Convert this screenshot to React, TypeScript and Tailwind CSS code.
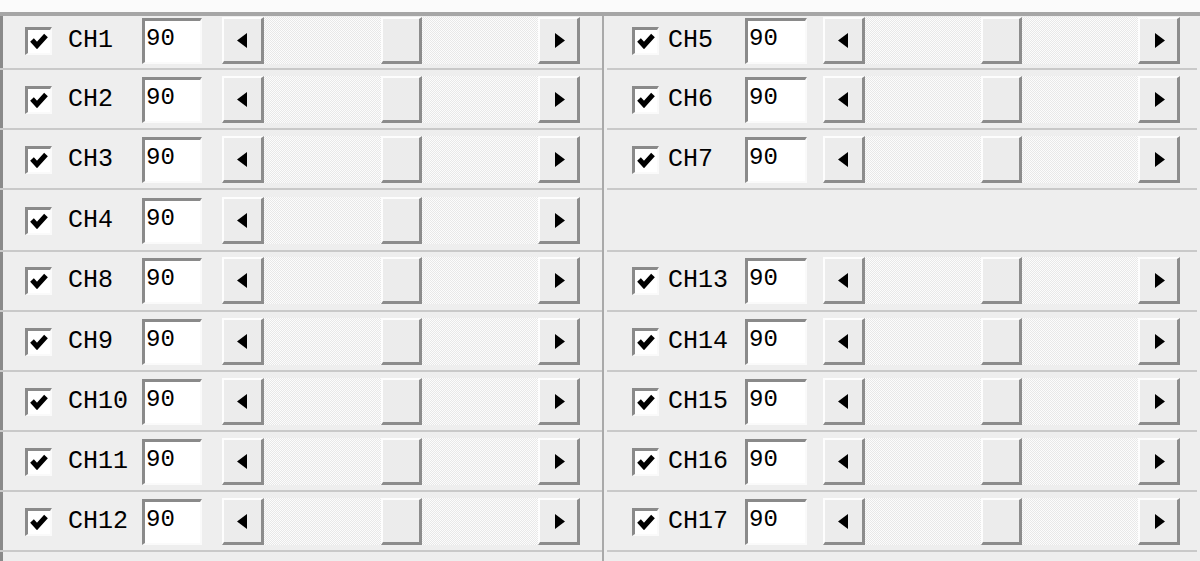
import React from "react"

type Pair = [number | null, number | null]

const rows: { pair: Pair; h: string; pt: string }[] = [
  { pair: [1, 5], h: "h-[54px]", pt: "pt-[1px]" },
  { pair: [2, 6], h: "h-[60px]", pt: "pt-[6px]" },
  { pair: [3, 7], h: "h-[60px]", pt: "pt-[6px]" },
  { pair: [4, null], h: "h-[62px]", pt: "pt-[7px]" },
  { pair: [8, 13], h: "h-[60px]", pt: "pt-[5px]" },
  { pair: [9, 14], h: "h-[60px]", pt: "pt-[6px]" },
  { pair: [10, 15], h: "h-[60px]", pt: "pt-[6px]" },
  { pair: [11, 16], h: "h-[60px]", pt: "pt-[6px]" },
  { pair: [12, 17], h: "h-[60px]", pt: "pt-[6px]" },
  { pair: [null, null], h: "h-[60px]", pt: "pt-[6px]" },
]

const raised =
  "bg-[#ececec] border-t-2 border-l-2 border-r-[3px] border-b-[3px] border-t-[#fdfdfd] border-l-[#fdfdfd] border-r-[#8c8c8c] border-b-[#8c8c8c]"

const Arrow = ({ dir }: { dir: "left" | "right" }) => (
  <svg width="10" height="15" viewBox="0 0 10 15">
    <polygon points={dir === "left" ? "10,0 0,7.5 10,15" : "0,0 10,7.5 0,15"} fill="#000" />
  </svg>
)

const Checkbox = () => (
  <div className="w-[27px] h-[28px] shrink-0 bg-white border-t-[3px] border-l-[3px] border-r-2 border-b-2 border-t-[#8a8a8a] border-l-[#8a8a8a] border-r-[#fafafa] border-b-[#fafafa] flex items-center justify-center">
    <svg width="18" height="16" viewBox="0 0 18 16">
      <polyline points="2,7 7,12.5 16,2.5" fill="none" stroke="#000" strokeWidth="5" strokeLinejoin="miter" />
    </svg>
  </div>
)

const ScrollBar = ({ value, max }: { value: number; max: number }) => (
  <div className="flex h-[47px] flex-1">
    <div className={`${raised} w-[42px] flex items-center justify-center pr-[2px]`}>
      <Arrow dir="left" />
    </div>
    <div className="flex-1 flex bg-[repeating-conic-gradient(#e8e8e8_0%_25%,#fcfcfc_0%_50%)] bg-[length:2px_2px]">
      <div style={{ flexGrow: value }} />
      <div className={`${raised} w-[41px]`} />
      <div style={{ flexGrow: max - value }} />
    </div>
    <div className={`${raised} w-[42px] flex items-center justify-center pl-[2px]`}>
      <Arrow dir="right" />
    </div>
  </div>
)

const ValueBox = ({ value, wide }: { value: number; wide?: boolean }) => (
  <div
    className={`${wide ? "w-[62px]" : "w-[60px]"} h-[46px] shrink-0 bg-white border-t-[3px] border-l-[3px] border-r-2 border-b-2 border-t-[#8a8a8a] border-l-[#8a8a8a] border-r-[#fafafa] border-b-[#fafafa] pt-[6px] pl-[1px] text-[24px] leading-[24px] text-black font-['Liberation_Mono',monospace]`}
  >
    {value}
  </div>
)

const Channel = ({ ch, side }: { ch: number; side: "left" | "right" }) => (
  <div className={`flex items-center ${side === "left" ? "pl-[22px] w-[577px]" : "pl-[28px] w-[576px]"}`}>
    <Checkbox />
    <div
      className={`${side === "left" ? "w-[90px] pl-[16px]" : "w-[86px] pl-[9px]"} text-[25px] leading-none text-black font-['Liberation_Mono',monospace] whitespace-nowrap`}
    >
      CH{ch}
    </div>
    <ValueBox value={90} wide={side === "right"} />
    <div className={`${side === "left" ? "ml-[20px]" : "ml-[16px]"} flex flex-1`}>
      <ScrollBar value={90} max={180} />
    </div>
  </div>
)

export default function App() {
  return (
    <div className="w-[1200px] h-[561px] overflow-hidden bg-[#eeeeee] select-none">
      <div className="h-[12px] bg-[#fbfbfb]" />
      <div className="h-[4px] bg-[#a6a6a6]" />
      {rows.map((row, i) => (
        <div key={i} className={`flex ${row.h}`}>
          <div className="w-[602px] flex flex-col">
            <div className={`flex-1 border-l-[3px] border-l-[#8a8a8a] ${row.pt}`}>
              {row.pair[0] !== null && <Channel ch={row.pair[0]} side="left" />}
            </div>
            <div className="h-[2px] bg-[#c9c9c9]" />
          </div>
          <div className="flex-1 flex flex-col border-l-2 border-l-[#a9a9a9]">
            <div className={`flex-1 ${row.pt}`}>
              {row.pair[1] !== null && <Channel ch={row.pair[1]} side="right" />}
            </div>
            <div className="h-[2px] bg-[#c9c9c9] ml-[3px] mr-[3px]" />
          </div>
        </div>
      ))}
    </div>
  )
}
